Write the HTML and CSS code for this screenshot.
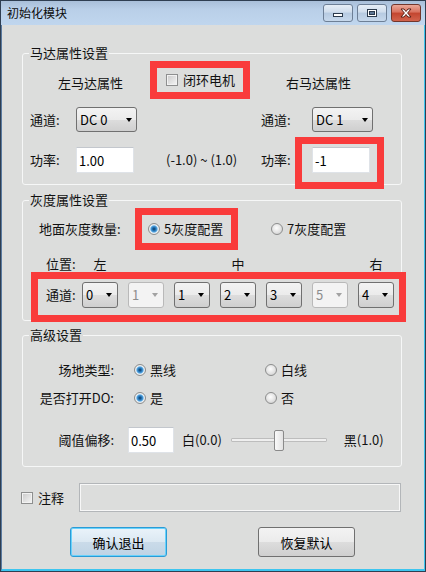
FILE: index.html
```html
<!DOCTYPE html>
<html lang="zh-CN">
<head>
<meta charset="UTF-8">
<meta name="viewport" content="width=device-width, initial-scale=1.0">
<title>初始化模块</title>
<link rel="stylesheet" href="styles.css">
</head>
<body>

<div class="window">
  <div class="titlebar">
    <span class="title">初始化模块</span>
    <div class="caption">
      <span class="cap-btn">
        <svg width="28" height="16" viewBox="0 0 28 16"><rect x="9.5" y="8.5" width="9" height="3" fill="#fff" stroke="#2b3a4c"/></svg>
      </span>
      <span class="cap-btn">
        <svg width="28" height="16" viewBox="0 0 28 16"><rect x="9.5" y="4.5" width="9" height="7" fill="#fff" stroke="#2b3a4c"/><rect x="11.5" y="6.5" width="5" height="3" fill="#5f7896" stroke="#2b3a4c"/></svg>
      </span>
      <span class="cap-btn close">
        <svg width="28" height="16" viewBox="0 0 28 16"><path d="M9 4 L12 4 L14 6.5 L16 4 L19 4 L15.6 8 L19 12 L16 12 L14 9.5 L12 12 L9 12 L12.4 8 Z" fill="#fff" stroke="#5a1f16" stroke-width="1" stroke-linejoin="round"/></svg>
      </span>
    </div>
  </div>

  <div class="client">
    <!-- motor -->
    <fieldset class="group motor">
      <legend>马达属性设置</legend>
      <div class="motor-grid">
        <div class="head head-left">左马达属性</div>
        <label class="check mark mark-check"><span class="box"></span>闭环电机</label>
        <div class="head head-right">右马达属性</div>

        <span class="lbl">通道:</span>
        <div class="combo wide"><span>DC 0</span><i></i></div>
        <span class="lbl col4">通道:</span>
        <div class="combo wide"><span>DC 1</span><i></i></div>

        <span class="lbl">功率:</span>
        <input class="edit" type="text" value="1.00">
        <span class="range">(-1.0) ~ (1.0)</span>
        <span class="lbl col4">功率:</span>
        <span class="mark mark-power"><input class="edit" type="text" value="-1"></span>
      </div>
    </fieldset>

    <!-- gray -->
    <fieldset class="group gray">
      <legend>灰度属性设置</legend>
      <div class="gray-count">
        <span class="count-lbl">地面灰度数量:</span>
        <label class="opt mark mark-radio"><span class="radio on"></span>5灰度配置</label>
        <label class="opt opt-7"><span class="radio"></span>7灰度配置</label>
      </div>
      <div class="pos-row">
        <span>位置:</span>
        <span class="pos c2">左</span>
        <span class="pos c5">中</span>
        <span class="pos c8">右</span>
      </div>
      <div class="chan-row mark">
        <span class="lbl">通道:</span>
        <div class="combo"><span>0</span><i></i></div>
        <div class="combo off"><span>1</span><i></i></div>
        <div class="combo"><span>1</span><i></i></div>
        <div class="combo"><span>2</span><i></i></div>
        <div class="combo"><span>3</span><i></i></div>
        <div class="combo off"><span>5</span><i></i></div>
        <div class="combo"><span>4</span><i></i></div>
      </div>
    </fieldset>

    <!-- advanced -->
    <fieldset class="group adv">
      <legend>高级设置</legend>
      <div class="adv-row">
        <span class="adv-lbl">场地类型:</span>
        <label class="opt first"><span class="radio on"></span>黑线</label>
        <label class="opt"><span class="radio"></span>白线</label>
      </div>
      <div class="adv-row row2">
        <span class="adv-lbl">是否打开DO:</span>
        <label class="opt first"><span class="radio on"></span>是</label>
        <label class="opt"><span class="radio"></span>否</label>
      </div>
      <div class="adv-row row3">
        <span class="adv-lbl">阈值偏移:</span>
        <input class="edit offset" type="text" value="0.50">
        <span class="white-lbl">白(0.0)</span>
        <div class="slider"><span class="thumb"></span></div>
        <span class="black-lbl">黑(1.0)</span>
      </div>
    </fieldset>

    <div class="note-row">
      <label class="check note-check"><span class="box"></span>注释</label>
      <div class="note-box"></div>
    </div>

    <div class="btn-row">
      <button class="btn focus">确认退出</button>
      <button class="btn restore">恢复默认</button>
    </div>
  </div>
</div>

</body>
</html>
```

FILE: styles.css
```css
* {
box-sizing: border-box;
}
body {
margin: 0;
font-family: "Noto Sans CJK SC", "Noto Sans", sans-serif;
font-size: 13px;
line-height: 16px;
color: #111;
background: #fff;
}
.window {
width: 426px;
height: 572px;
border: 1px solid #2f3e51;
display: flex;
flex-direction: column;
background: #bcd2ea;
}

/* title bar */
.titlebar {
height: 24px;
flex: none;
display: flex;
align-items: center;
justify-content: space-between;
padding: 0 4px 0 6px;
background: linear-gradient(#a9bfd9, #b9cfe8 35%, #c0d6ee);
}
.title {
font-size: 12px;
color: #0c0c0c;
}
.caption {
display: flex;
gap: 4px;
}
.cap-btn {
width: 30px;
height: 18px;
border: 1px solid #6d7f96;
border-radius: 3px;
display: flex;
background: linear-gradient(#e6eef7, #cfdcec 45%, #b6cae1 50%, #c6d8ec);
}
.cap-btn.close {
border-color: #71362c;
background: linear-gradient(#eaa898, #d8705d 45%, #c3452f 50%, #d2634d);
}

/* client area */
.client {
flex: 1;
background: #dcdddc;
border-left: 1px solid #5a7aa0;
border-right: 1px solid #3dc5ef;
border-bottom: 2px solid #3dc5ef;
padding-top: 20px;
}
.group {
margin: 0 0 0 20px;
width: 380px;
min-width: 0;
border: 1px solid #f6f7f7;
border-radius: 3px;
padding: 7px 0 11px 7px;
}
.group legend {
padding: 0 1px;
margin-left: -1px;
line-height: 16px;
}

/* red marks */
.mark {
outline: 7px solid #f93b3b;
}

/* motor */
.motor-grid {
display: grid;
grid-template-columns: 46px 61px 124px 51px 61px;
grid-template-rows: 24px 25px 26px;
row-gap: 15px;
align-items: center;
}
.head {
padding-top: 6px;
}
.head-left {
grid-column: 1 / 3;
padding-left: 28px;
}
.head-right {
grid-column: 4 / 6;
padding-left: 25px;
}
.col4 {
grid-column: 4;
}
.mark-check {
margin-left: 20px;
width: 86px;
height: 24px;
padding-left: 9px;
}
.range {
grid-column: 3;
padding-left: 29px;
white-space: nowrap;
}
.mark-power {
display: block;
justify-self: start;
padding: 3px 7px 9px 10px;
margin: -3px -7px -9px -10px;
}

/* controls */
.check {
display: flex;
align-items: center;
gap: 5px;
}
.box {
width: 12px;
height: 12px;
border: 1px solid #8e8f8f;
background: linear-gradient(135deg, #c9c9c9, #f6f6f6);
box-shadow: inset 0 0 0 1px #f2f2f2;
}
.opt {
display: flex;
align-items: center;
gap: 4px;
}
.radio {
width: 12px;
height: 12px;
border-radius: 50%;
border: 1px solid #8c8d8d;
background: radial-gradient(circle at 45% 40%, #fdfdfd, #e2e2e2 55%, #c4c4c4);
}
.radio.on {
background: radial-gradient(circle at 50% 50%, #0d3963 0, #1f6aa8 1.5px, #4f9fdc 3px, #b9dcf5 3.8px, #eef1f3 4.3px, #cfcfcf 100%);
}
.combo {
height: 26px;
width: 36px;
display: flex;
align-items: center;
justify-content: space-between;
padding: 0 5px 0 3px;
border: 1px solid #707070;
border-radius: 3px;
background: linear-gradient(#f3f3f3, #ebebeb 50%, #dddddd 50%, #cfcfcf);
color: #000;
}
.combo.wide {
width: 61px;
height: 25px;
padding: 0 4px 0 3px;
}
.combo i {
width: 0;
height: 0;
border-left: 3.5px solid transparent;
border-right: 3.5px solid transparent;
border-top: 4px solid #000;
}
.combo.off {
border-color: #b9b9b9;
background: #f3f3f3;
color: #8d8d8d;
}
.combo.off i {
border-top-color: #a2a2a2;
}
.edit {
width: 58px;
height: 26px;
margin: 0;
padding: 0 2px;
border: 1px solid #dfe3e8;
border-top-color: #c3c7cd;
background: #fff;
font-family: inherit;
font-size: 13px;
color: #000;
outline: none;
}

/* gray */
.gray {
margin-top: 7px;
padding-bottom: 5px;
}
.gray-count {
display: flex;
align-items: center;
height: 28px;
}
.count-lbl {
margin-left: 9px;
width: 103px;
}
.mark-radio {
width: 89px;
height: 28px;
padding-left: 6px;
}
.opt-7 {
margin-left: 40px;
}
.pos-row {
display: grid;
grid-template-columns: 36px repeat(6, 46px) 36px;
margin-top: 13px;
padding-left: 16px;
height: 16px;
}
.pos {
width: 36px;
text-align: center;
}
.c2 { grid-column: 2; }
.c5 { grid-column: 5; }
.c8 { grid-column: 8; }
.chan-row {
display: grid;
grid-template-columns: 36px repeat(6, 46px) 36px;
align-items: center;
width: 361px;
margin: 7px 0 0 8px;
padding: 3px 5px 7px 8px;
}

/* advanced */
.adv {
margin-top: 6px;
padding: 19px 0 13px 7px;
}
.adv-row {
display: flex;
align-items: center;
height: 16px;
}
.adv-lbl {
width: 84px;
text-align: right;
}
.opt.first {
margin-left: 20px;
width: 131px;
}
.row2 {
margin-top: 12px;
}
.row3 {
margin-top: 21px;
height: 26px;
}
.edit.offset {
width: 46px;
margin-left: 14px;
}
.white-lbl {
margin-left: 8px;
}
.slider {
margin-left: 9px;
width: 96px;
height: 4px;
border: 1px solid #bdbdbd;
border-radius: 1px;
background: #efefef;
display: flex;
align-items: center;
justify-content: center;
}
.thumb {
flex: none;
width: 10px;
height: 21px;
border: 1px solid #8a8a8a;
border-radius: 2px;
background: linear-gradient(90deg, #fafafa, #e2e2e2);
}
.black-lbl {
margin-left: 17px;
}

/* note */
.note-row {
display: flex;
align-items: center;
margin-top: 16px;
padding-left: 19px;
height: 29px;
}
.note-check {
width: 58px;
}
.note-box {
width: 322px;
height: 29px;
border: 1px solid #b3b6b9;
box-shadow: inset 0 0 0 1px #f7f7f7;
}

/* buttons */
.btn-row {
display: flex;
margin-top: 15px;
padding-left: 68px;
}
.btn {
width: 97px;
height: 30px;
margin: 0;
border: 1px solid #707070;
border-radius: 3px;
background: linear-gradient(#f3f3f3, #ebebeb 50%, #dddddd 50%, #cfcfcf);
font-family: inherit;
font-size: 13px;
color: #000;
}
.btn.focus {
border-color: #2b9bd6;
box-shadow: inset 0 0 0 1px #68d2fb;
background: linear-gradient(#eaf3fa, #dbe8f2 50%, #cadbe9 50%, #bfd3e4);
}
.btn.restore {
margin-left: 91px;
}
```
